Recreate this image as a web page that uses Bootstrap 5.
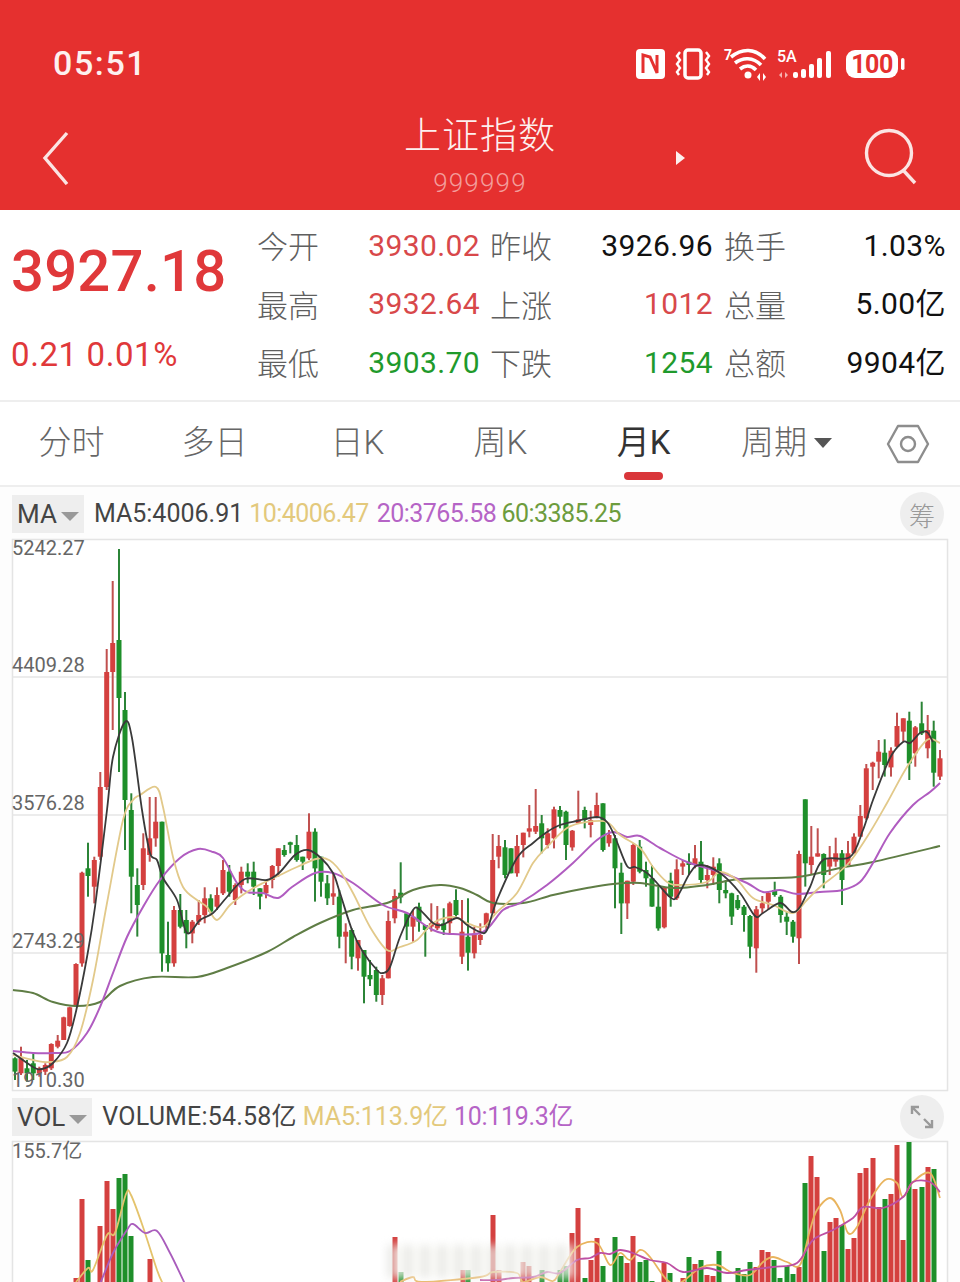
<!DOCTYPE html>
<html lang="zh-CN">
  <head>
    <meta charset="UTF-8" />
    <meta name="viewport" content="width=device-width, initial-scale=1.0" />
    <title>上证指数</title>
    <link href="https://cdn.jsdelivr.net/npm/bootstrap@5.3.3/dist/css/bootstrap.min.css" rel="stylesheet" />
    <style>
      html, body { height: 1282px; overflow: hidden; }
      body {
        margin: 0;
        background: #fdfdfd;
        font-family: Roboto, "Noto Sans CJK SC", sans-serif;
        color: #333;
      }
      .app-head { background: #e5302f; height: 210px; color: #fdf0ef; }
      .status-row { height: 112px; padding: 40px 53px 0 53px; }
      .status-time { font-size: 34px; font-weight: 500; letter-spacing: 1.6px; line-height: 1; margin-bottom: 26px; }
      .status-icons { margin-bottom: 24px; }
      .title-row { display: grid; grid-template-columns: 1fr auto 1fr; padding: 0 40px; height: 98px; margin-top: -3px; }
      .title-main { font-family: "Noto Sans CJK SC", sans-serif; font-size: 37px; font-weight: 300; line-height: 48px; letter-spacing: 1px; }
      .title-code { font-size: 26px; color: #f39d9b; letter-spacing: 1.2px; line-height: 36px; margin-top: 8px; font-weight: 300; }
      .back-icon { margin-top: 20px; }
      .next-icon { margin: 41px 0 0 119px; }
      .search-icon { margin: 19px 0 0 0; }
      .quote-panel { height: 192px; background: #fff; border-bottom: 2px solid #eee; }
      .price-box { width: 257px; padding: 29px 0 0 11px; color: #e0383a; }
      .price-now { font-size: 58px; font-weight: 500; line-height: 64px; letter-spacing: .2px; }
      .price-diff { font-size: 33px; line-height: 36px; margin-top: 34px; letter-spacing: .6px; }
      .quote-grid {
        display: grid;
        grid-template-columns: 61px 162px 72px 161px 73px 160px;
        grid-auto-rows: 58.5px;
        padding-top: 6px;
        align-items: center;
      }
      .q-label { font-family: "Noto Sans CJK SC", sans-serif; font-size: 31px; font-weight: 300; color: #5f5f5f; text-align: right; white-space: nowrap; }
      .q-val { font-size: 30px; text-align: right; letter-spacing: .4px; white-space: nowrap; font-family: Roboto, "Noto Sans CJK SC", sans-serif; }
      .up-text { color: #d8484a; }
      .down-text { color: #1f9a2c; }
      .flat-text { color: #111; }
      .tab-bar { height: 85px; background: #fff; border-bottom: 2px solid #eee; position: relative; }
      .tab-item {
        width: 143px;
        height: 83px;
        padding-top: 16px;
        text-align: center;
        font-family: Roboto, "Noto Sans CJK SC", sans-serif;
        font-size: 33px;
        line-height: 50px;
        font-weight: 300;
        color: #666;
        position: relative;
      }
      .tab-on { color: #333; font-weight: 400; }
      .tab-on::after {
        content: "";
        position: absolute;
        left: 52px;
        bottom: 5px;
        width: 39px;
        height: 8px;
        border-radius: 4px;
        background: #d9363a;
      }
      .caret-down {
        display: inline-block;
        border-left: 9px solid transparent;
        border-right: 9px solid transparent;
        border-top: 10px solid #555;
        vertical-align: middle;
        margin-left: 7px;
        margin-top: -4px;
      }
      .hex-btn { margin-left: 28px; margin-top: 22px; }
      .ind-row { height: 52px; padding: 8px 16px 6px 12px; font-size: 25px; white-space: nowrap; }
      .vol-row { height: 50px; padding: 6px 16px 4px 12px; font-size: 25px; white-space: nowrap; }
      .ind-box {
        background: #eee;
        height: 38px;
        padding: 0 5px;
        margin-right: 10px;
        color: #444;
        font-size: 26px;
        line-height: 38px;
      }
      .ind-box .caret-down { border-left-width: 9px; border-right-width: 9px; border-top: 9px solid #999; margin-left: 4px; margin-top: 0; }
      .ma-black { color: #444; }
      .ma-yellow { color: #e3c97c; margin-left: 6px; }
      .ma-purple { color: #b564c6; margin-left: 8px; }
      .ma-green { color: #6d9c3d; margin-left: 5px; }
      .ind-row .ma-yellow, .ind-row .ma-purple, .ind-row .ma-green { letter-spacing: -.55px; }
      .vol-row .ma-black { letter-spacing: .2px; }
      .vol-row .ma-yellow { letter-spacing: -.1px; }
      .vol-row .ma-purple { letter-spacing: -.3px; margin-left: 6px; }
      .round-btn {
        width: 44px;
        height: 44px;
        border-radius: 50%;
        background: #eee;
        color: #999;
        font-family: "Noto Sans CJK SC", sans-serif;
        font-size: 26px;
        font-weight: 300;
      }
      .chart-svg { display: block; overflow: visible; }
      .chart-label { font-family: Roboto, "Noto Sans CJK SC", sans-serif; font-size: 20px; fill: #666; }
      .vol-zone { position: relative; }
      .smudge {
        position: absolute;
        left: 388px;
        top: 104px;
        width: 186px;
        height: 33px;
        background: repeating-linear-gradient(90deg, rgba(205, 205, 200, .55) 0 6px, rgba(250, 250, 246, .85) 6px 17px);
        filter: blur(4px);
      }
    </style>
  </head>
  <body>
    <header class="app-head">
      <div class="status-row d-flex justify-content-between align-items-center">
        <div class="status-time">05:51</div>
        <svg width="272" height="40" viewBox="635 44 272 40" class="status-icons">
          <!-- nfc -->
          <rect x="636" y="49" width="29" height="30" rx="4" fill="#fff" />
          <path d="M643 73V55l7 2 7 16 0-18" fill="none" stroke="#e5302f" stroke-width="3" />
          <!-- vibrate -->
          <rect x="685" y="50" width="16" height="28" rx="3" fill="none" stroke="#fff" stroke-width="3.5" />
          <path d="M680 52l-3 4 3 4-3 4 3 4-3 4 2 3M706 52l3 4-3 4 3 4-3 4 3 4-2 3" fill="none" stroke="#fff" stroke-width="2.4" />
          <!-- wifi -->
          <text x="724" y="60" font-size="14" font-weight="700" fill="#fff" font-family="Roboto">7</text>
          <path d="M731 57c11-9 24-9 34 2M735 63c8-6 18-6 26 2M740 69c5-4 11-4 16 1" fill="none" stroke="#fff" stroke-width="3.6" />
          <circle cx="748" cy="75" r="3.5" fill="#fff" />
          <path d="M757 77l3-4v8zM763 73l3 4-3 4z" fill="#fff" />
          <!-- signal -->
          <text x="777" y="62" font-size="16" font-weight="500" fill="#fff" font-family="Roboto">5A</text>
          <path d="M782 72l-3 3 3 3zM785 72l3 3-3 3z" fill="#f6b3b0" />
          <rect x="793" y="72" width="5" height="6" rx="2" fill="#fff" />
          <rect x="801" y="69" width="5" height="9" rx="2" fill="#fff" />
          <rect x="809" y="64" width="5" height="14" rx="2" fill="#fff" />
          <rect x="817" y="58" width="5" height="20" rx="2" fill="#fff" />
          <rect x="826" y="51" width="5" height="27" rx="2" fill="#fff" />
          <!-- battery -->
          <rect x="846" y="50" width="52" height="28" rx="9" fill="#fff" />
          <rect x="901" y="58" width="3.5" height="12" rx="1.7" fill="#fff" />
          <text x="872" y="73" text-anchor="middle" font-size="25" font-weight="700" fill="#e5302f" font-family="Roboto" letter-spacing="-.5">100</text>
        </svg>
      </div>
      <div class="title-row">
        <div>
          <svg width="32" height="56" viewBox="0 0 32 56" class="back-icon">
            <path d="M27 4L5 29l22 26" fill="none" stroke="#fbe4e3" stroke-width="3.4" />
          </svg>
        </div>
        <div class="text-center">
          <div class="title-main">上证指数</div>
          <div class="title-code">999999</div>
        </div>
        <div class="d-flex justify-content-between align-items-start">
          <svg width="12" height="16" viewBox="0 0 12 16" class="next-icon">
            <path d="M1 1l9 7-9 7z" fill="#fdf0ef" />
          </svg>
          <svg width="58" height="58" viewBox="0 0 58 58" class="search-icon">
            <circle cx="27" cy="25" r="22.5" fill="none" stroke="#fbe4e3" stroke-width="3.4" />
            <path d="M41 42l12 13" fill="none" stroke="#fbe4e3" stroke-width="3.4" />
          </svg>
        </div>
      </div>
    </header>

    <section class="quote-panel d-flex">
      <div class="price-box">
        <div class="price-now">3927.18</div>
        <div class="price-diff">0.21 0.01%</div>
      </div>
      <div class="quote-grid">
        <div class="q-label">今开</div><div class="q-val up-text">3930.02</div>
        <div class="q-label">昨收</div><div class="q-val flat-text">3926.96</div>
        <div class="q-label">换手</div><div class="q-val flat-text">1.03%</div>
        <div class="q-label">最高</div><div class="q-val up-text">3932.64</div>
        <div class="q-label">上涨</div><div class="q-val up-text">1012</div>
        <div class="q-label">总量</div><div class="q-val flat-text">5.00亿</div>
        <div class="q-label">最低</div><div class="q-val down-text">3903.70</div>
        <div class="q-label">下跌</div><div class="q-val down-text">1254</div>
        <div class="q-label">总额</div><div class="q-val flat-text">9904亿</div>
      </div>
    </section>

    <nav class="tab-bar d-flex">
      <div class="tab-item">分时</div>
      <div class="tab-item">多日</div>
      <div class="tab-item">日K</div>
      <div class="tab-item">周K</div>
      <div class="tab-item tab-on">月K</div>
      <div class="tab-item">周期<span class="caret-down"></span></div>
      <svg class="hex-btn" width="44" height="40" viewBox="0 0 44 40">
        <path d="M12 2h20l10 18-10 18H12L2 20z" fill="none" stroke="#8d8d8d" stroke-width="2.4" stroke-linejoin="round" />
        <circle cx="22" cy="20" r="7" fill="none" stroke="#8d8d8d" stroke-width="2.4" />
      </svg>
    </nav>

    <div class="ind-row d-flex align-items-center">
      <div class="ind-box">MA<span class="caret-down"></span></div>
      <span class="ma-black">MA5:4006.91</span>
      <span class="ma-yellow">10:4006.47</span>
      <span class="ma-purple">20:3765.58</span>
      <span class="ma-green">60:3385.25</span>
      <div class="round-btn ms-auto d-flex align-items-center justify-content-center">筹</div>
    </div>

    <svg id="mainChart" class="chart-svg" width="960" height="552" viewBox="0 539 960 552"></svg>

    <div class="vol-row d-flex align-items-center">
      <div class="ind-box">VOL<span class="caret-down"></span></div>
      <span class="ma-black">VOLUME:54.58亿</span>
      <span class="ma-yellow">MA5:113.9亿</span>
      <span class="ma-purple">10:119.3亿</span>
      <div class="round-btn ms-auto d-flex align-items-center justify-content-center">
        <svg width="26" height="26" viewBox="0 0 26 26">
          <path d="M3 10V3h7M3 3l8 8M23 16v7h-7M23 23l-8-8" fill="none" stroke="#999" stroke-width="2.4" />
        </svg>
      </div>
    </div>

    <div class="vol-zone">
      <svg id="volChart" class="chart-svg" width="960" height="141" viewBox="0 1141 960 141"></svg>
      <div class="smudge"></div>
    </div>

    <script src="https://cdn.jsdelivr.net/npm/bootstrap@5.3.3/dist/js/bootstrap.bundle.min.js"></script>
    <script>
      // candles: colour, x, high, low, body top, body bottom, in crop coords (3x), one group per crop
      const candleGroups = [
        { x0: 0, y0: 800, rows: "g 45 772 840 775 815,r 63 740 825 775 820,g 81 780 845 805 820,g 100 760 840 790 820,r 118 800 830 805 820,r 136 790 825 795 815,r 154 730 810 732 805,r 173 705 745 722 740,r 191 650 720 652 720,r 209 620 680 622 678,r 228 490 620 492 620,r 246 215 500 218 490,g 264 128 290 205 228,r 283 170 310 180 260,r 301 -84 180 -39 170,r 320 -453 -30 -384 -39,r 338 -657 -210 -471 -384,g 357 -753 -84 -480 -306,g 375 -324 150 -270 0,g 394 -20 340 30 230,g 412 205 410 255 315,r 430 100 270 145 255,r 449 -9 185 115 165,r 467 -9 140 65 115,g 486 65 515 65 460,g 504 365 515 465 490,r 522 318 500 330 490,g 541 282 385 330 380,g 559 330 445 360 400,r 577 360 430 365 400,r 596 300 375 345 365,r 614 262 370 295 345,g 632 283 345 295 335,r 651 262 330 285 320,r 669 180 285 210 280,g 688 195 290 215 275,r 706 250 315 255 300,r 724 200 280 215 255,g 743 190 250 215 230,g 761 185 285 215 260,g 780 265 328 265 290,r 798 240 295 255 280,r 817 195 265 198 240,r 835 145 230 145 198,g 853 135 170 150 165,g 871 125 160 127 133,g 890 105 185 135 180,g 908 170 210 170 185,r 927 40 180 95 175,g 945 85 305 95 205" },
        { x0: 320, y0: 760, rows: "g 3 290 410 290 365,g 22 345 435 370 415,r 40 340 435 400 410,g 58 390 565 410 530,r 77 490 610 515 530,g 95 505 628 510 590,r 114 540 632 540 595,g 132 570 730 570 650,g 150 600 678 645 658,g 169 620 725 630 705,r 187 645 735 655 705,r 205 452 655 483 655,r 224 388 490 408 475,g 242 307 430 398 412,g 260 460 540 460 500,r 279 450 545 470 500,g 297 428 515 440 485,g 316 495 590 495 510,r 334 430 515 490 500,r 352 438 510 490 505,g 371 445 525 490 510,r 389 425 525 430 490,g 408 388 470 420 465,r 426 420 612 515 590,g 444 415 632 530 578,r 463 500 595 525 580,r 481 490 555 525 540,r 499 458 510 460 495,r 518 222 460 300 460,r 536 225 325 258 290,g 555 240 355 262 345,g 573 265 340 265 340,r 591 225 350 258 340,r 610 218 292 218 255,r 628 135 232 205 215,r 647 87 222 198 215,g 665 165 280 190 235,r 683 205 265 220 255,r 702 140 265 148 235,g 720 138 205 150 170,g 738 152 300 155 255,r 757 210 272 212 262,r 775 92 192 178 190,g 794 140 205 150 180,r 812 152 232 180 195,r 830 98 175 135 170,g 849 130 275 130 270,r 867 210 260 225 250,g 885 225 445 235 325,g 904 308 522 338 430,r 922 362 477 362 430,r 940 250 375 255 365,g 959 240 340 260 335" },
        { x0: 640, y0: 690, rows: "g 18 515 590 540 565,g 36 525 650 565 650,g 55 590 722 650 715,r 73 590 715 592 712,g 92 548 650 572 620,r 110 508 630 538 625,r 128 510 555 520 530,g 147 490 555 515 525,r 165 465 535 505 525,g 183 453 580 515 570,r 202 525 595 555 570,r 220 502 585 530 555,g 238 505 640 520 600,g 257 570 625 600 610,g 275 608 705 610 680,g 293 615 660 630 655,g 312 645 725 650 675,g 330 675 805 678 770,r 349 648 848 658 775,r 367 618 670 640 655,r 385 605 660 608 635,g 404 575 620 600 615,g 422 615 698 620 675,g 440 665 735 680 695,g 459 690 758 695 740,r 477 482 822 492 745,g 496 328 590 328 520,r 514 408 555 500 525,r 533 415 500 490 500,g 551 490 595 492 555,r 569 468 555 505 530,r 587 443 530 490 515,g 606 480 645 490 570,r 624 453 525 490 525,r 642 430 490 440 490,r 661 345 440 378 440,r 679 222 390 235 385,r 698 215 300 218 230,r 716 150 265 185 215,g 734 148 260 188 225,r 753 172 260 182 232,r 771 68 172 108 170,r 790 85 155 85 125,g 808 65 270 92 220,r 826 108 230 112 190,g 845 35 135 100 130,r 863 75 205 120 175,g 881 92 290 122 248,r 900 180 270 205 260" }
      ];

      const maBlack = "13,1053 33,1067 42,1069 53,1063 67,1043 77,1007 87,957 95,907 107,810 113,757 125,722 132,738 142,810 150,853 157,860 163,878 177,900 187,933 200,920 213,913 227,897 245,879 267,880 280,872 295,855 308,850 321,858 333,873 340,893 352,930 363,952 377,970 383,973 390,967 400,937 413,910 420,910 433,923 442,925 457,918 467,925 480,932 487,930 497,900 517,858 533,843 547,832 560,825 577,821 597,817 607,822 615,837 627,866 635,867 647,873 657,883 670,897 677,897 690,873 700,865 720,873 740,893 755,916 763,913 780,903 792,912 800,907 810,887 823,860 850,857 863,830 873,800 890,758 903,742 910,743 920,733 927,732 933,742";
      const maYellow = "13,1055 33,1060 50,1062 67,1057 80,1033 93,980 107,903 123,820 133,800 140,795 156,787 163,807 173,857 183,887 197,900 207,907 217,920 230,905 247,892 263,883 280,875 297,867 321,858 337,867 353,893 370,927 387,950 400,947 417,940 433,923 453,917 467,923 483,927 497,912 517,893 533,863 547,847 567,828 587,822 607,822 620,835 640,848 653,867 667,882 680,885 707,882 720,872 737,880 753,898 773,905 793,913 807,900 820,887 847,865 867,837 887,803 907,767 927,740 940,743";
      const maPurple = "13,1051 33,1053 53,1053 70,1051 87,1033 100,1007 113,973 127,937 143,907 160,880 180,858 198,849 213,852 223,858 237,883 247,892 263,893 278,898 292,887 315,873 333,873 353,883 383,905 407,913 433,930 453,934 483,932 503,910 520,903 547,885 573,863 597,840 613,832 627,837 640,836 660,848 687,862 720,872 747,883 763,892 780,890 797,894 820,892 843,890 860,882 873,863 890,833 913,805 930,792 940,783";
      const maGreen = "13,990 33,993 53,1002 77,1006 100,1002 120,986 153,977 197,977 227,968 267,952 293,937 320,923 353,910 387,903 413,890 440,885 460,888 477,895 493,903 523,903 553,895 587,888 613,884 640,883 673,888 707,885 740,879 797,877 840,868 873,862 940,846";

      const volRed = "76,1278 82,1199 100,1226 107,1181 113,1209 150,1259 395,1237 463,1270 493,1215 499,1270 523,1262 529,1266 572,1233 578,1208 591,1260 597,1238 627,1263 633,1236 664,1263 683,1278 695,1264 707,1275 713,1276 756,1267 762,1250 768,1252 799,1267 811,1156 817,1177 830,1222 836,1218 848,1249 854,1238 860,1173 866,1168 873,1158 879,1207 891,1194 897,1145 903,1240 915,1189 928,1167";
      const volGreen = "88,1260 119,1178 125,1174 131,1236 401,1272 468,1270 542,1270 560,1270 566,1266 585,1278 603,1266 615,1237 621,1256 640,1262 646,1260 652,1281 670,1273 689,1257 701,1260 719,1251 738,1268 744,1274 750,1262 774,1260 780,1278 787,1266 793,1274 805,1183 824,1251 842,1225 885,1199 909,1142 922,1187 934,1169";

      const volLines = [
        { color: "#e4c36c", pts: "76,1282 88,1268 93,1270 107,1235 115,1233 126,1194 131,1195 143,1227 157,1270 163,1284" },
        { color: "#a95cbc", pts: "100,1284 113,1253 127,1230 133,1224 145,1233 157,1231 170,1253 185,1284" },
        { color: "#e9b45e", pts: "400,1282 413,1277 422,1282 480,1277 493,1272 517,1273 523,1282 540,1277 553,1281 560,1272 577,1247 597,1243 610,1265 620,1253 630,1260 640,1250 650,1257 667,1280 680,1283 700,1268 717,1265 733,1273 750,1275 763,1262 773,1257 787,1262 800,1265 810,1230 817,1210 830,1198 840,1210 848,1233 857,1227 870,1200 885,1180 897,1183 903,1197 913,1182 930,1173 940,1198" },
        { color: "#bd4fa3", pts: "480,1280 497,1280 513,1278 533,1277 547,1272 560,1273 577,1260 590,1258 600,1253 610,1254 620,1250 633,1253 650,1260 667,1263 683,1272 707,1268 727,1273 747,1270 773,1267 797,1263 813,1240 833,1230 853,1218 863,1207 883,1208 903,1197 913,1182 930,1182 940,1192" }
      ];

      const RED = "#d4403f", GREEN = "#1e8f2a", RED_WICK = "#c0504f", GREEN_WICK = "#2b8437";

      function parsePts(s) {
        return s.split(" ").map((p) => p.split(",").map(Number));
      }

      // catmull-rom through the read points, so the MA lines stay round
      function smoothPath(pts) {
        let d = "M" + pts[0][0] + " " + pts[0][1];
        for (let i = 0; i < pts.length - 1; i++) {
          const p0 = pts[i - 1] || pts[i], p1 = pts[i], p2 = pts[i + 1], p3 = pts[i + 2] || p2;
          const c1x = p1[0] + (p2[0] - p0[0]) / 6, c1y = p1[1] + (p2[1] - p0[1]) / 6;
          const c2x = p2[0] - (p3[0] - p1[0]) / 6, c2y = p2[1] - (p3[1] - p1[1]) / 6;
          d += "C" + c1x.toFixed(1) + " " + c1y.toFixed(1) + " " + c2x.toFixed(1) + " " + c2y.toFixed(1) + " " + p2[0] + " " + p2[1];
        }
        return d;
      }

      function linePath(pts, color, width) {
        return '<path d="' + smoothPath(parsePts(pts)) + '" fill="none" stroke="' + color + '" stroke-width="' + width + '"/>';
      }

      function drawMain() {
        let html = '<rect x="12.5" y="539.5" width="935" height="551" fill="#fff" stroke="#e4e4e4" stroke-width="1.5"/>';
        [677, 815, 953].forEach((y) => {
          html += '<line x1="12" x2="947" y1="' + y + '" y2="' + y + '" stroke="#e6e6e6" stroke-width="1.5"/>';
        });
        candleGroups.forEach((g) => {
          g.rows.split(",").forEach((row) => {
            const f = row.split(" ");
            const x = g.x0 + f[1] / 3;
            const y = (v) => g.y0 + v / 3;
            const hi = y(+f[2]), lo = y(+f[3]), top = y(+f[4]), bot = y(+f[5]);
            const up = f[0] === "r";
            html += '<rect x="' + (x - 1).toFixed(1) + '" y="' + hi.toFixed(1) + '" width="2" height="' + (lo - hi).toFixed(1) + '" fill="' + (up ? RED_WICK : GREEN_WICK) + '"/>';
            html += '<rect x="' + (x - 2.5).toFixed(1) + '" y="' + top.toFixed(1) + '" width="5" height="' + Math.max(bot - top, 2.5).toFixed(1) + '" fill="' + (up ? RED : GREEN) + '"/>';
          });
        });
        html += linePath(maGreen, "#5f7d45", 2);
        html += linePath(maPurple, "#b05cc0", 2);
        html += linePath(maYellow, "#e2c98a", 1.8);
        html += linePath(maBlack, "#3a3a3a", 1.8);
        [["5242.27", 555], ["4409.28", 672], ["3576.28", 810], ["2743.29", 948], ["1910.30", 1087]].forEach((l) => {
          html += '<text class="chart-label" x="12" y="' + l[1] + '">' + l[0] + "</text>";
        });
        document.getElementById("mainChart").innerHTML = html;
      }

      function drawVol() {
        let html = '<path d="M12.5 1282V1141.5H947.5V1282" fill="#fff" stroke="#e4e4e4" stroke-width="1.5"/>';
        parsePts(volRed).forEach((b) => {
          html += '<rect x="' + (b[0] - 2.5) + '" y="' + b[1] + '" width="5" height="' + (1282 - b[1]) + '" fill="' + RED + '"/>';
        });
        parsePts(volGreen).forEach((b) => {
          html += '<rect x="' + (b[0] - 2.5) + '" y="' + b[1] + '" width="5" height="' + (1282 - b[1]) + '" fill="' + GREEN + '"/>';
        });
        volLines.forEach((l) => {
          html += linePath(l.pts, l.color, 1.8);
        });
        html += '<text class="chart-label" x="12" y="1158">155.7亿</text>';
        document.getElementById("volChart").innerHTML = html;
      }

      drawMain();
      drawVol();
    </script>
  </body>
</html>
